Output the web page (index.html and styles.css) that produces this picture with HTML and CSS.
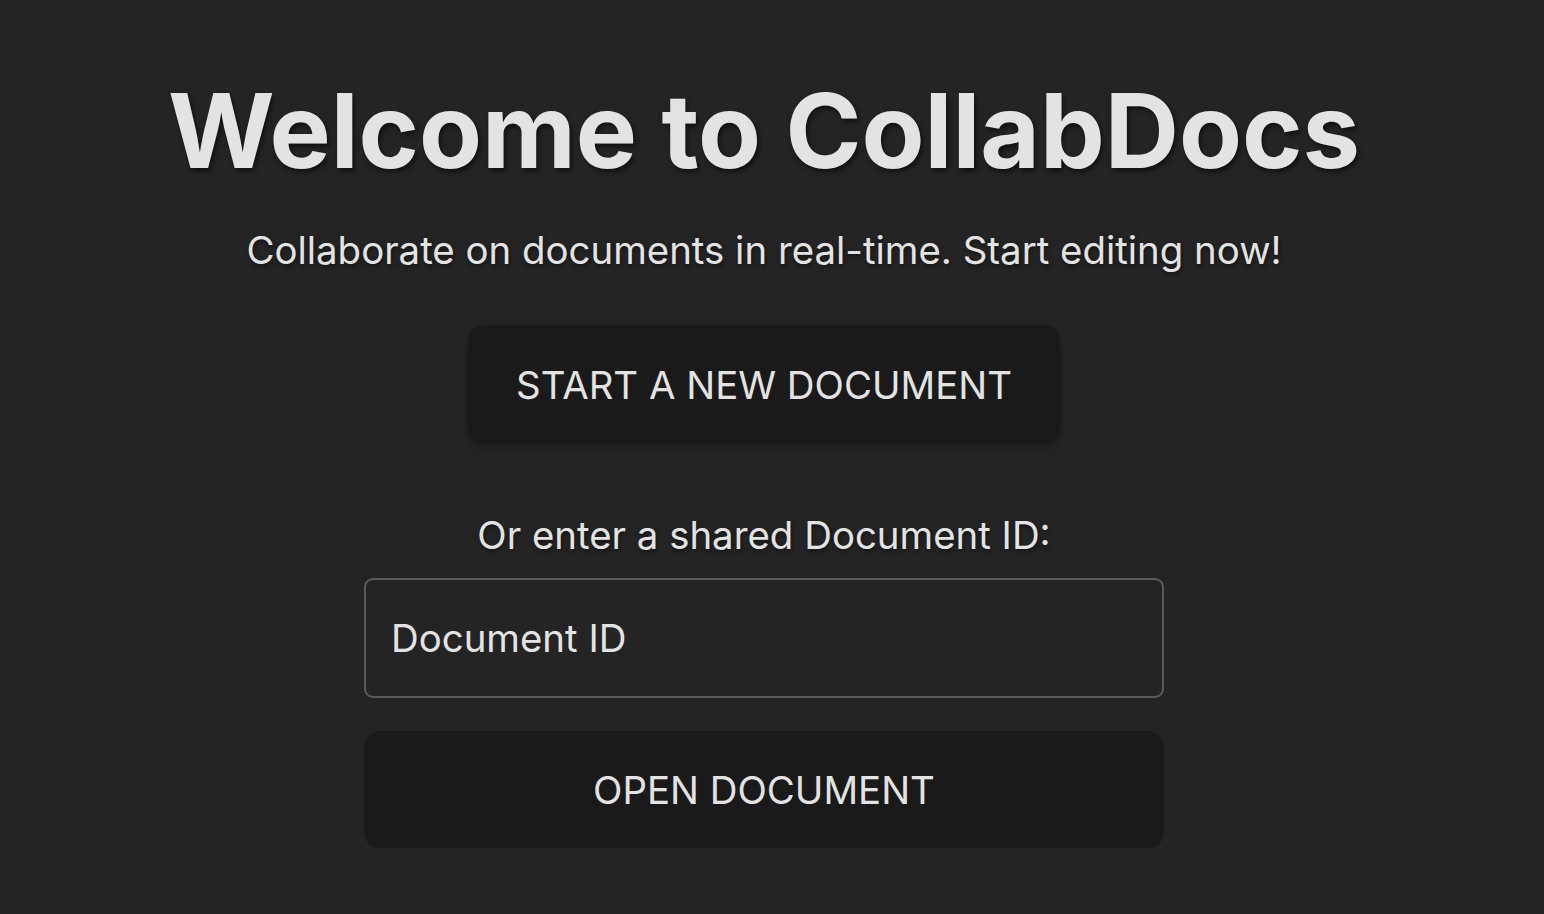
FILE: index.html
```html
<!DOCTYPE html>
<html lang="en">
<head>
<meta charset="utf-8">
<title>CollabDocs</title>
<link rel="stylesheet" href="styles.css">
</head>
<body>
<main class="home">
  <h1 class="title">Welcome to CollabDocs</h1>
  <p class="subtitle">Collaborate on documents in real-time. Start editing now!</p>
  <button class="btn btn-start" type="button">Start a New Document</button>
  <p class="label">Or enter a shared Document ID:</p>
  <div class="join">
    <input class="doc-input" type="text" placeholder="Document ID">
    <button class="btn btn-open" type="button">Open Document</button>
  </div>
</main>
</body>
</html>
```
FILE: styles.css
```css
html, body {
  margin: 0;
  padding: 0;
  background: #242424;
  height: 100%;
}
body {
  font-family: Inter, "Noto Sans", sans-serif;
  color: #e3e3e3;
  padding-right: 16px;
  box-sizing: border-box;
}
.home {
  display: flex;
  flex-direction: column;
  align-items: center;
  padding-top: 74px;
}
.title {
  margin: 0;
  font-size: 102.8px;
  font-weight: 700;
  line-height: 1.1;
  color: #e3e3e3;
  text-shadow: 2px 3px 5px rgba(0,0,0,0.55);
}
.subtitle {
  margin: 40px 0 0;
  font-size: 38.4px;
  line-height: 1.2;
  text-shadow: 1px 2px 4px rgba(0,0,0,0.5);
}
.btn {
  font-family: inherit;
  font-size: 38.4px;
  color: #e3e3e3;
  background: #1a1a1a;
  border: none;
  border-radius: 16px;
  text-transform: uppercase;
  cursor: pointer;
}
.btn-start {
  margin-top: 52px;
  width: 592px;
  height: 119px;
  box-shadow: 0 3px 8px rgba(0,0,0,0.25);
}
.label {
  margin: 68px 0 0;
  font-size: 38.4px;
  line-height: 1.2;
  text-shadow: 1px 2px 4px rgba(0,0,0,0.5);
}
.join {
  display: flex;
  flex-direction: column;
  gap: 33px;
  margin-top: 20px;
  width: 800px;
}
.doc-input {
  box-sizing: border-box;
  height: 120px;
  width: 100%;
  padding: 0 25px;
  font-family: inherit;
  font-size: 38.4px;
  color: #e3e3e3;
  background: #242424;
  border: 2px solid #5a5a5a;
  border-radius: 9px;
  outline: none;
}
.doc-input::placeholder {
  color: #e3e3e3;
  opacity: 1;
}
.btn-open {
  width: 100%;
  height: 117px;
}
```
